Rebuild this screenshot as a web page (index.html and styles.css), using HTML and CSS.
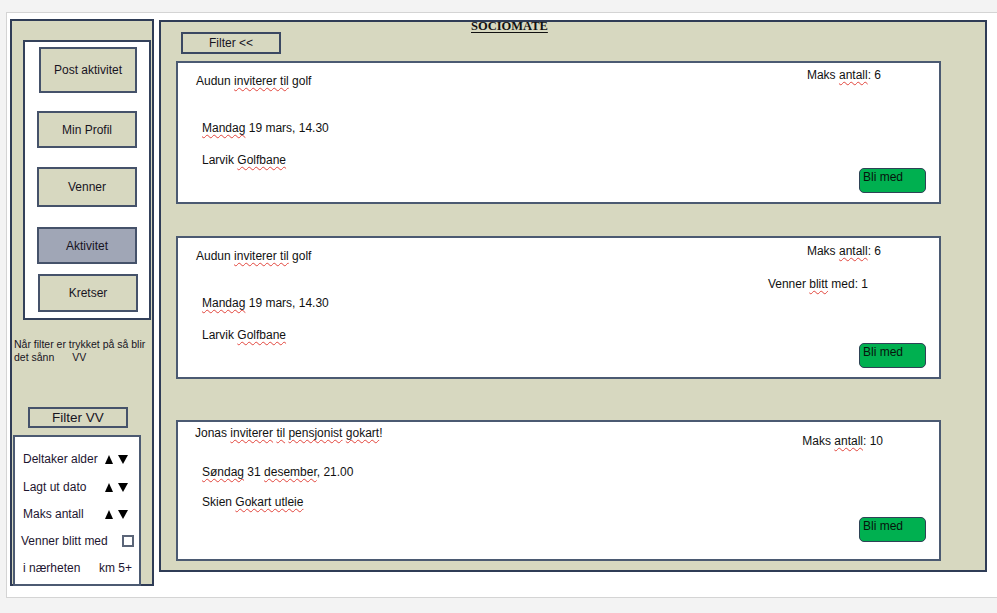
FILE: index.html
```html
<!DOCTYPE html>
<html lang="no">
<head>
<meta charset="utf-8">
<title>Sociomate</title>
<link rel="stylesheet" href="styles.css">
</head>
<body>
<div class="canvas">
  <aside class="sidebar">
    <nav class="menu">
      <div class="btn m-post">Post aktivitet</div>
      <div class="btn m-profil">Min Profil</div>
      <div class="btn m-venner">Venner</div>
      <div class="btn m-akt">Aktivitet</div>
      <div class="btn m-kretser">Kretser</div>
    </nav>
    <p class="note">Når filter er trykket på så blir<br>det sånn<span class="vv">VV</span></p>
    <div class="btn filter-vv">Filter VV</div>
    <div class="filterbox">
      <div class="frow">
        <span>Deltaker alder</span>
        <svg class="arrows" width="23" height="9" viewBox="0 0 23 9"><polygon points="0,9 4,0 8,9" /><polygon points="13,0 23,0 18,9" /></svg>
      </div>
      <div class="frow">
        <span>Lagt ut dato</span>
        <svg class="arrows" width="23" height="9" viewBox="0 0 23 9"><polygon points="0,9 4,0 8,9" /><polygon points="13,0 23,0 18,9" /></svg>
      </div>
      <div class="frow short">
        <span>Maks antall</span>
        <svg class="arrows" width="23" height="9" viewBox="0 0 23 9"><polygon points="0,9 4,0 8,9" /><polygon points="13,0 23,0 18,9" /></svg>
      </div>
      <div class="frow check">
        <span>Venner blitt med</span>
        <span class="checkbox"></span>
      </div>
      <div class="frow short near">
        <span>i nærheten</span>
        <span>km 5+</span>
      </div>
    </div>
  </aside>

  <main class="main">
    <h1 class="title">SOCIOMATE</h1>
    <div class="btn btn-filter">Filter &lt;&lt;</div>

    <section class="card">
      <div class="card-left">
        <div class="c-title">Audun <span class="sp">inviterer til</span> golf</div>
        <div class="c-date"><span class="sp">Mandag</span> 19 mars, 14.30</div>
        <div class="c-place">Larvik <span class="sp">Golfbane</span></div>
      </div>
      <div class="card-right">
        <div class="maks">Maks <span class="sp">antall</span>: 6</div>
        <div class="join">Bli med</div>
      </div>
    </section>

    <section class="card card-2">
      <div class="card-left">
        <div class="c-title">Audun <span class="sp">inviterer til</span> golf</div>
        <div class="c-date c-date-2"><span class="sp">Mandag</span> 19 mars, 14.30</div>
        <div class="c-place">Larvik <span class="sp">Golfbane</span></div>
      </div>
      <div class="card-right">
        <div class="maks">Maks <span class="sp">antall</span>: 6</div>
        <div class="venner">Venner <span class="sp">blitt</span> med: 1</div>
        <div class="join">Bli med</div>
      </div>
    </section>

    <section class="card card-3">
      <div class="card-left">
        <div class="c-title">Jonas <span class="sp">inviterer</span> <span class="sp">til</span> <span class="sp">pensjonist</span> <span class="sp">gokart</span>!</div>
        <div class="c-date"><span class="sp">Søndag</span> 31 <span class="sp">desember</span>, 21.00</div>
        <div class="c-place">Skien <span class="sp">Gokart utleie</span></div>
      </div>
      <div class="card-right">
        <div class="maks">Maks <span class="sp">antall</span>: 10</div>
        <div class="join">Bli med</div>
      </div>
    </section>
  </main>
</div>
</body>
</html>
```

FILE: styles.css
```css
html, body {
  margin: 0;
  padding: 0;
}

body {
  background: #f3f3f3;
  font-family: "Liberation Sans", Arial, sans-serif;
  color: #141414;
  height: 613px;
  overflow: hidden;
}

.canvas {
  margin: 12px 0 0 6px;
  height: 586px;
  box-sizing: border-box;
  background: #ffffff;
  border: 1px solid #d4d4d4;
  border-right: none;
  padding: 6px 0 0 3px;
  display: flex;
  align-items: flex-start;
}

/* ---------- sidebar ---------- */
.sidebar {
  flex-shrink: 0;
  width: 144px;
  height: 567px;
  box-sizing: border-box;
  border: 2px solid #2f3c56;
  background: #d7d8c0;
  display: flex;
  flex-direction: column;
  align-items: flex-start;
}

.sidebar > * {
  flex-shrink: 0;
}

.menu {
  margin: 19px 0 0 11px;
  width: 128px;
  height: 280px;
  box-sizing: border-box;
  background: #ffffff;
  border: 2px solid #34415b;
  display: flex;
  flex-direction: column;
  align-items: flex-start;
}

.menu > * {
  flex-shrink: 0;
}

.btn {
  box-sizing: border-box;
  display: flex;
  align-items: center;
  justify-content: center;
  background: #d7d8c0;
  border: 2px solid #45526a;
  font-size: 12px;
  color: #17141f;
}

.m-post { margin: 5px 0 0 14px; width: 98px; height: 46px; }
.m-profil { margin: 18px 0 0 12px; width: 100px; height: 37px; }
.m-venner { margin: 19px 0 0 12px; width: 100px; height: 40px; }
.m-akt { margin: 20px 0 0 12px; width: 100px; height: 37px; background: #a0a6b6; }
.m-kretser { margin: 10px 0 0 13px; width: 100px; height: 38px; }

.note {
  margin: 18px 0 0 2px;
  font-size: 10.5px;
  line-height: 13px;
  color: #17141f;
}

.vv { margin-left: 18px; }

.filter-vv {
  margin: 43px 0 0 16px;
  width: 100px;
  height: 21px;
  font-size: 13.5px;
}

.filterbox {
  margin: 7px 0 0 1px;
  width: 128px;
  height: 151px;
  box-sizing: border-box;
  border: 2px solid #4c5a72;
  background: #ffffff;
  padding-top: 8px;
  font-size: 12px;
  color: #1d1530;
}

.frow {
  height: 28px;
  display: flex;
  align-items: center;
  justify-content: space-between;
  padding: 0 11px 0 8px;
}

.frow.short { height: 26px; }
.frow.check { padding: 0 5px 0 6px; }
.frow.near { padding: 0 7px 0 8px; }

.arrows polygon { fill: #000000; }

.checkbox {
  width: 12px;
  height: 12px;
  box-sizing: border-box;
  border: 2px solid #5b6578;
  background: #ffffff;
}

/* ---------- main ---------- */
.main {
  flex-shrink: 0;
  margin: 1px 0 0 5px;
  width: 828px;
  height: 552px;
  box-sizing: border-box;
  border: 2px solid #2f3c56;
  background: #d7d8c0;
}

.title {
  margin: -1px 0 0 310px;
  height: 10px;
  font: bold 12.5px/10px "Liberation Serif", "Times New Roman", serif;
  text-decoration: underline;
  text-decoration-thickness: 1px;
  text-underline-offset: 2px;
  color: #111111;
}

.btn-filter {
  margin: 1px 0 0 20px;
  width: 100px;
  height: 22px;
  border-color: #3b4862;
}

.card {
  margin: 7px 0 0 15px;
  width: 765px;
  height: 143px;
  box-sizing: border-box;
  border: 2px solid #4b5a72;
  background: #ffffff;
  display: flex;
  justify-content: space-between;
  font-size: 12px;
  line-height: 14px;
  color: #111111;
}

.card-2 { margin-top: 32px; }
.card-3 { margin-top: 41px; height: 141px; }

.card-left { padding: 11px 0 0 18px; }
.c-date { margin-top: 33px; padding-left: 6px; }
.c-place { margin-top: 18px; padding-left: 6px; }

.card-3 .card-left { padding: 4px 0 0 17px; }
.card-3 .c-date { margin-top: 25px; padding-left: 7px; }
.card-3 .c-place { margin-top: 16px; padding-left: 7px; }

.card-right {
  display: flex;
  flex-direction: column;
  align-items: flex-end;
  padding: 5px 13px 9px 0;
}

.card-2 .card-right { padding-top: 6px; }
.card-3 .card-right { padding: 12px 13px 17px 0; }

.maks { margin-right: 45px; }
.card-3 .maks { margin-right: 43px; }

.venner { margin: 19px 58px 0 0; }

.join {
  margin-top: auto;
  width: 67px;
  height: 25px;
  box-sizing: border-box;
  border: 1px solid #2f4256;
  border-radius: 5px;
  background: #00b050;
  padding: 1px 0 0 3px;
  color: #07140c;
}

.sp {
  text-decoration: underline wavy #e2453c;
  text-decoration-thickness: 1px;
  text-underline-offset: 2px;
  text-decoration-skip-ink: none;
}
```
